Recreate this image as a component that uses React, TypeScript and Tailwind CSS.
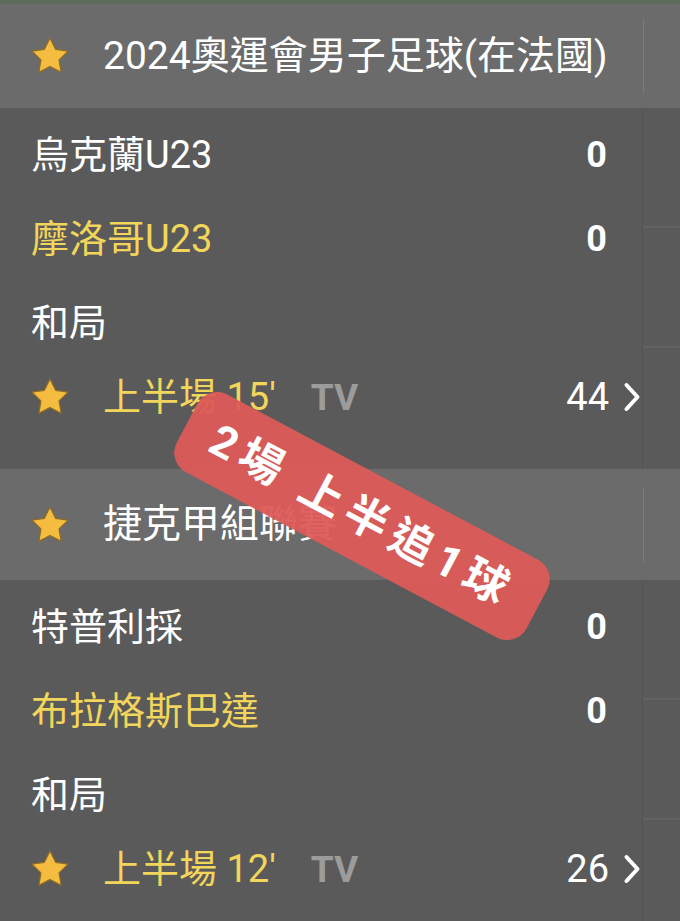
import React from "react";

const FONT = { fontFamily: 'Roboto, "Noto Sans CJK TC", "Noto Sans", sans-serif' };

function Star() {
  return (
    <svg width="40" height="40" viewBox="0 0 40 40" className="shrink-0">
      <path
        d="M20 2 L25.59 13.31 L38.07 15.13 L29.03 23.94 L31.17 36.37 L20 30.5 L8.83 36.37 L10.97 23.94 L1.93 15.13 L14.41 13.31 Z"
        fill="#f5bd3f"
        stroke="#8f6c25"
        strokeWidth="1.2"
        strokeLinejoin="round"
      />
    </svg>
  );
}

function Chevron() {
  return (
    <svg width="18" height="32" viewBox="0 0 18 32" className="shrink-0">
      <path d="M3.5 4 L14.5 16 L3.5 28" fill="none" stroke="#ffffff" strokeWidth="4" strokeLinecap="round" strokeLinejoin="round" />
    </svg>
  );
}

function Header({ title, h }: { title: string; h: string }) {
  return (
    <div className={`flex ${h} bg-[#6b6b6b]`}>
      <div className="flex w-[643px] items-center pl-[30px]">
        <Star />
        <span className="ml-[33px] text-[39px] leading-none text-white">{title}</span>
      </div>
      <div className="flex flex-1 flex-col justify-center">
        <div className="h-[75px] w-px bg-[#7a7a7a]" />
      </div>
    </div>
  );
}

function TeamRow({ name, score, yellow }: { name: string; score?: string; yellow?: boolean }) {
  return (
    <div className="flex h-[84px] items-center justify-between pl-[31px] pr-[35px]">
      <span className={`text-[38px] leading-none ${yellow ? "text-[#f1d65b]" : "text-white"}`}>{name}</span>
      {score !== undefined && <span className="text-[36px] font-bold leading-none text-white">{score}</span>}
    </div>
  );
}

function StatusRow({ half, minute, count }: { half: string; minute: string; count: string }) {
  return (
    <div className="flex h-[64px] items-center pl-[30px] pr-[1px]">
      <Star />
      <span className="ml-[33px] text-[38px] leading-none text-[#f1d65b]">
        {half} {minute}
      </span>
      <span className="ml-[35px] text-[37px] font-bold leading-none text-[#9c9c9c]">TV</span>
      <div className="ml-auto flex items-center gap-[14px]">
        <span className="text-[38px] leading-none text-white">{count}</span>
        <Chevron />
      </div>
    </div>
  );
}

function Stub() {
  return (
    <div className="flex flex-1 flex-col border-l border-[#535353]">
      <div className="h-[120px] border-b-2 border-[#626262]" />
      <div className="h-[120px] border-b-2 border-[#626262]" />
      <div className="flex-1" />
    </div>
  );
}

export default function App() {
  return (
    <div className="relative h-[921px] w-[680px] overflow-hidden bg-[#5a5a5a]" style={FONT}>
      <div className="h-[4px] bg-[#5e6a5b]" />
      <Header title="2024奧運會男子足球(在法國)" h="h-[104px]" />
      <div className="flex h-[361px]">
        <div className="w-[642px] pt-[5px]">
          <TeamRow name="烏克蘭U23" score="0" />
          <TeamRow name="摩洛哥U23" score="0" yellow />
          <TeamRow name="和局" />
          <StatusRow half="上半場" minute="15'" count="44" />
        </div>
        <Stub />
      </div>
      <Header title="捷克甲組聯賽" h="h-[111px]" />
      <div className="flex h-[341px]">
        <div className="w-[642px] pt-[5px]">
          <TeamRow name="特普利採" score="0" />
          <TeamRow name="布拉格斯巴達" score="0" yellow />
          <TeamRow name="和局" />
          <StatusRow half="上半場" minute="12'" count="26" />
        </div>
        <Stub />
      </div>

      <div className="absolute left-[164px] top-[472px] flex h-[88px] w-[396px] rotate-[28deg] items-center justify-center rounded-[22px] bg-[#dc5b58]/95">
        <span className="text-[44px] font-bold leading-none tracking-[7px] text-white">2場 上半追1球</span>
      </div>
    </div>
  );
}
